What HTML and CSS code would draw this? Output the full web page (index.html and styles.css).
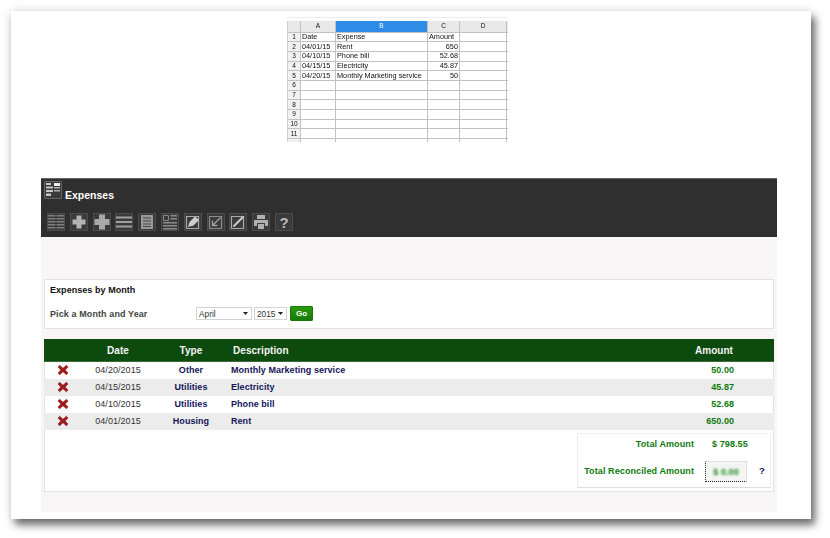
FILE: index.html
```html
<!DOCTYPE html>
<html lang="en">
<head>
<meta charset="utf-8">
<title>Expenses</title>
<link rel="stylesheet" href="styles.css">
</head>
<body>
<svg class="defs" width="0" height="0" aria-hidden="true">
  <symbol id="del" viewBox="0 0 12 12"><path d="M2.600 1.200 6 4.200 9.400 1.200 11 3 8.200 6 11 9 9.400 10.800 6 7.800 2.600 10.800 1 9 3.800 6 1 3Z" fill="#9c1c1c" stroke="#9c1c1c" stroke-width=".6" stroke-linejoin="round"/></symbol>
</svg>
<main class="sheet">
  <div class="shot-wrap">
    <table class="shot">
      <colgroup><col class="s0"><col class="s1"><col class="s2"><col class="s3"><col class="s4"><col class="s5"></colgroup>
      <thead><tr><th></th><th>A</th><th class="sel">B</th><th>C</th><th>D</th><th></th></tr></thead>
      <tbody>
        <tr><th>1</th><td>Date</td><td>Expense</td><td>Amount</td><td></td><td></td></tr>
        <tr><th>2</th><td>04/01/15</td><td>Rent</td><td class="r">650</td><td></td><td></td></tr>
        <tr><th>3</th><td>04/10/15</td><td>Phone bill</td><td class="r">52.68</td><td></td><td></td></tr>
        <tr><th>4</th><td>04/15/15</td><td>Electricity</td><td class="r">45.87</td><td></td><td></td></tr>
        <tr><th>5</th><td>04/20/15</td><td>Monthly Marketing service</td><td class="r">50</td><td></td><td></td></tr>
        <tr><th>6</th><td></td><td></td><td></td><td></td><td></td></tr>
        <tr><th>7</th><td></td><td></td><td></td><td></td><td></td></tr>
        <tr><th>8</th><td></td><td></td><td></td><td></td><td></td></tr>
        <tr><th>9</th><td></td><td></td><td></td><td></td><td></td></tr>
        <tr><th>10</th><td></td><td></td><td></td><td></td><td></td></tr>
        <tr><th>11</th><td></td><td></td><td></td><td></td><td></td></tr>
        <tr><th></th><td></td><td></td><td></td><td></td><td></td></tr>
      </tbody>
    </table>
  </div>

  <section class="app">
    <header class="bar">
      <div class="title-row">
        <span class="title-icon">
          <svg viewBox="0 0 16 16" width="16" height="16"><path d="M1 1h5v2H1zM1 4.500h7v2H1zM1 8h7v2H1zM1 11.500h5v2.500H1z" fill="#c8c8c8"/><path d="M9 1h6v3H9z" fill="#eee"/><path d="M9 5h6v1.500H9zM9 8h6v1.500H9z" fill="#b0b0b0"/></svg>
        </span>
        <h1 class="title">Expenses</h1>
      </div>
      <div class="tools">
        <span class="tool"><svg viewBox="0 0 16 16"><path d="M0 1h7.500v1.500H0zM8.500 1H16v1.500H8.500zM0 4h7.500v1.500H0zM8.500 4H16v1.500H8.500zM0 7h7.500v1.500H0zM8.500 7H16v1.500H8.500zM0 10h7.500v1.500H0zM8.500 10H16v1.500H8.500zM0 13h7.500v1.500H0zM8.500 13H16v1.500H8.500z" fill="#7f7f7f"/></svg></span>
        <span class="tool"><svg viewBox="0 0 16 16"><path d="M5.500 1.500h5v4h4v5h-4v4h-5v-4h-4v-5h4z" fill="#b4b4b4"/></svg></span>
        <span class="tool"><svg viewBox="0 0 16 16"><path d="M5 .5h6v4.500h4.500v6H11v4.500H5V11H.5V5H5z" fill="#a8a8a8"/></svg></span>
        <span class="tool"><svg viewBox="0 0 16 16"><path d="M0 2.500h16v2H0zM0 7h16v2H0zM0 11.500h16v2H0z" fill="#a0a0a0"/></svg></span>
        <span class="tool"><svg viewBox="0 0 16 16"><path d="M2 1h12v14H2z" fill="#999"/><path d="M4 3.500h8v1H4zM4 6.500h8v1H4zM4 9.500h8v1H4zM4 12h8v1H4z" fill="#484848"/></svg></span>
        <span class="tool"><svg viewBox="0 0 16 16"><path d="M1.500 1.500h5v5h-5z" fill="none" stroke="#888"/><path d="M8.500 1H15v1.500H8.500zM8.500 4H15v1.500H8.500zM1 8h14v1.500H1zM1 11h14v1.500H1zM1 14h14v1.500H1z" fill="#8c8c8c"/></svg></span>
        <span class="tool"><svg viewBox="0 0 16 16"><path d="M1.500 2.500h12v12h-12z" fill="none" stroke="#aaa" stroke-width="1.200"/><path d="M3 13l1.500-5L10 2.500l4 3.500L8.500 11.500z" fill="#ccc"/></svg></span>
        <span class="tool"><svg viewBox="0 0 16 16"><path d="M1.500 2.500h12v12h-12z" fill="none" stroke="#8c8c8c" stroke-width="1.200"/><path d="M12.500 3.500 5 11M4.500 6.500v5h5" fill="none" stroke="#a0a0a0" stroke-width="1.300"/></svg></span>
        <span class="tool"><svg viewBox="0 0 16 16"><path d="M1.500 2.500h12v12h-12z" fill="none" stroke="#aaa" stroke-width="1.200"/><path d="M3.500 12.500 13.500 2.500" fill="none" stroke="#ccc" stroke-width="2"/></svg></span>
        <span class="tool"><svg viewBox="0 0 16 16"><path d="M4 1h8v4H4zM1 6h14v6h-3V9H4v3H1zM5 10h6v5H5z" fill="#b0b0b0"/></svg></span>
        <span class="tool help">?</span>
      </div>
    </header>

    <div class="panel">
      <section class="filter">
        <h2 class="filter-title">Expenses by Month</h2>
        <div class="filter-row">
          <label class="filter-label" for="m">Pick a Month and Year</label>
          <select id="m" class="sel-month"><option>April</option></select>
          <select class="sel-year" aria-label="Year"><option>2015</option></select>
          <button class="go" type="button">Go</button>
        </div>
      </section>

      <section class="list">
        <table class="grid">
          <colgroup><col class="c1"><col class="c2"><col class="c3"><col class="c4"><col class="c5"></colgroup>
          <thead><tr><th></th><th>Date</th><th>Type</th><th class="hd">Description</th><th class="amt">Amount</th></tr></thead>
          <tbody>
            <tr><td class="x"><svg width="12" height="12"><use href="#del"/></svg></td><td class="date">04/20/2015</td><td class="type">Other</td><td class="desc">Monthly Marketing service</td><td class="val">50.00</td></tr>
            <tr><td class="x"><svg width="12" height="12"><use href="#del"/></svg></td><td class="date">04/15/2015</td><td class="type">Utilities</td><td class="desc">Electricity</td><td class="val">45.87</td></tr>
            <tr><td class="x"><svg width="12" height="12"><use href="#del"/></svg></td><td class="date">04/10/2015</td><td class="type">Utilities</td><td class="desc">Phone bill</td><td class="val">52.68</td></tr>
            <tr><td class="x"><svg width="12" height="12"><use href="#del"/></svg></td><td class="date">04/01/2015</td><td class="type">Housing</td><td class="desc">Rent</td><td class="val">650.00</td></tr>
          </tbody>
        </table>
        <div class="totals">
          <div class="t-row first">
            <span class="t-label">Total Amount</span>
            <span class="t-val">$ 798.55</span>
          </div>
          <div class="t-row second">
            <span class="t-label">Total Reconciled Amount</span>
            <span class="t-box"><span class="t-blur">$ 0.00</span></span>
            <span class="t-q">?</span>
          </div>
        </div>
      </section>
    </div>
  </section>
</main>
</body>
</html>
```

FILE: styles.css
```css
* { box-sizing: border-box; }
html, body { margin: 0; padding: 0; background: #fff; }
body { width: 830px; height: 538px; overflow: hidden; padding: 11px 0 0 11px; font-family: "Liberation Sans", Arial, sans-serif; }
.defs { position: absolute; }

.sheet {
  width: 800px;
  height: 508px;
  background: #fff;
  padding: 6px 34px 0 30px;
  box-shadow: 0 0 10px rgba(0,0,0,.14), 4px 6px 8px rgba(0,0,0,.55);
}

.shot-wrap { width: 221px; height: 125px; margin-left: 246px; overflow: hidden; border-top: 1px solid #eee; padding-top: 3px; }
.shot { border-collapse: collapse; table-layout: fixed; width: 221px; font-size: 7.300px; line-height: 8px; color: #111; filter: blur(.25px); }
.s0 { width: 13px; } .s1 { width: 35px; } .s2 { width: 92px; } .s3 { width: 32px; } .s4 { width: 47px; } .s5 { width: 2px; }
.shot th, .shot td { height: 9.700px; padding: 0 1px; border: 1px solid #c2c2c2; border-left-color: #d0d0d0; white-space: nowrap; overflow: hidden; font-weight: normal; text-align: left; }
.shot th { background: #f1f1f1; text-align: center; font-size: 6.500px; }
.shot thead th { height: 11px; background: #e8e8e8; border-top: 0; }
.shot thead .sel { background: #2f8ce6; color: #fff; }
.shot .r { text-align: right; }

.app { margin-top: 36px; width: 736px; }
.bar { height: 59px; background: #2f2f2f; padding: 2px 3px 0; border-top: 1px solid #666; }
.title-row { display: flex; align-items: center; height: 18px; gap: 3px; }
.title-icon { width: 18px; height: 18px; border: 1px solid #666; border-radius: 1px; display: flex; align-items: center; justify-content: center; background: #3a3a3a; }
.title { margin: 9px 0 0; font-size: 10.500px; font-weight: bold; color: #fff; }
.tools { display: flex; gap: 4.800px; margin: 14px 0 0 3px; }
.tool { width: 18px; height: 18px; border: 1px solid #4c4c4c; background: #3a3a3a; display: flex; align-items: center; justify-content: center; }
.tool svg { width: 16px; height: 16px; flex: none; }
.help { color: #bcbcbc; font-size: 15px; font-weight: bold; }

.panel { height: 275px; background: #f7f5f6; padding: 42px 3px 0; }
.filter { height: 50px; background: #fff; border: 1px solid #e4e2e2; padding: 5px 5px 0; }
.filter-title { margin: 0; font-size: 9px; line-height: 11px; font-weight: bold; color: #111; letter-spacing: .05px; }
.filter-row { display: flex; align-items: center; margin-top: 10px; height: 15px; }
.filter-label { width: 146px; font-size: 9px; font-weight: bold; color: #444; letter-spacing: .1px; }
.sel-month, .sel-year { height: 13px; padding: 0 0 0 2px; font: 8.300px "Liberation Sans", Arial, sans-serif; color: #333; border: 1px solid #d4d4d4; border-radius: 0; appearance: none; background: #fff url("data:image/svg+xml,%3Csvg xmlns='http://www.w3.org/2000/svg' width='5' height='3'%3E%3Cpath d='M0 0h5L2.500 3z' fill='%23222'/%3E%3C/svg%3E") no-repeat right 3px center; }
.sel-month { width: 56px; margin-right: 2px; }
.sel-year { width: 33px; margin-right: 3px; }
.go { width: 23px; height: 15px; padding: 0; border: 1px solid #1a7a06; border-radius: 1px; background: linear-gradient(#2a9a10, #147a04); color: #fff; font: bold 8px "Liberation Sans", Arial, sans-serif; }

.list { margin-top: 10px; height: 153px; background: #fff; border: 1px solid #e4e2e2; border-top: 0; }
.grid { width: 730px; margin-left: -1px; border-collapse: separate; border-spacing: 0; table-layout: fixed; font-size: 9px; font-weight: bold; letter-spacing: .05px; }
.c1 { width: 38px; } .c2 { width: 72px; } .c3 { width: 74px; } .c4 { width: 456px; } .c5 { width: 90px; }
.grid thead th { height: 23px; padding: 0; background: #0d4a0d; color: #f4f4f4; font-size: 10px; font-weight: bold; border-bottom: 1px solid #3a6a3a; }
.grid thead .hd { text-align: left; padding-left: 5px; }
.grid thead .amt { text-align: right; padding-right: 41px; }
.grid tbody td { height: 17px; padding: 0 0 1px; text-align: center; }
.grid tbody tr:nth-child(even) { background: #ececec; }
.x svg { display: block; margin: 0 auto; }
.date { font-weight: normal; color: #333; }
.type, .desc { color: #14145a; }
.grid tbody .desc { text-align: left; padding-left: 3px; }
.grid tbody .val { text-align: right; padding-right: 40px; color: #0d7a0d; }

.totals { width: 194px; height: 55px; margin: 3px 0 0 532px; background: #fff; border: 1px solid #eee; border-bottom-color: #ddd; font-size: 9px; font-weight: bold; color: #0d7a0d; letter-spacing: .1px; }
.t-row { display: flex; align-items: center; }
.t-label { width: 116px; text-align: right; }
.first { height: 20px; }
.t-val { margin-left: 18px; }
.second { height: 21px; margin-top: 7px; }
.second .t-label, .t-q { margin-bottom: 2px; }
.t-box { width: 42px; height: 21px; margin-left: 11px; background: #f4f4f2; border: 1px dotted #ccc; border-left-color: #222; border-bottom-color: #222; display: flex; align-items: center; justify-content: center; }
.t-blur { filter: blur(1.200px); color: #1c8a1c; }
.t-q { margin-left: 12px; color: #14145a; font-size: 9.500px; }
```
